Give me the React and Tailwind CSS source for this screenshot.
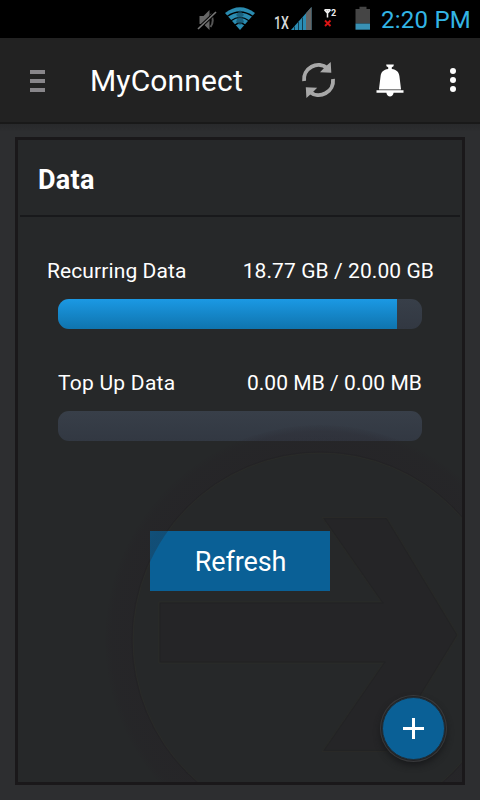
function StatusBar() {
  return (
    <div className="flex h-[38px] shrink-0 items-center bg-black pl-[196px]">
      <svg className="h-[38px] w-[174px] shrink-0" viewBox="196 0 174 38">
        {/* muted speaker */}
        <path d="M199.500 16h4l6-6v20l-6-6h-4z" fill="#666" />
        <path d="M210.500 14c3 3 3 9 0 13" fill="none" stroke="#555" strokeWidth="2" />
        <path d="M198 29L216 12" stroke="#000" strokeWidth="3.500" />
        <path d="M198 29L216 12" stroke="#777" strokeWidth="1.7" />
        {/* wifi */}
        <path d="M225 13Q240 1.500 255 13L240 30Z" fill="#2a8bb0" />
        <path d="M227 16.500Q240 7.500 253 16.500M231 20.800Q240 14 249 20.800M235 25Q240 21 245 25" fill="none" stroke="#000" strokeWidth="1.300" />
        <path d="M240 10l4 5-2 2 2 5-4 3-4-3 2-5-2-2z" fill="#16506a" opacity=".7" />
        <text x="274" y="29" fill="#d8d8d8" fontFamily="Roboto, sans-serif" fontWeight="500" fontSize="17.500" textLength="15" lengthAdjust="spacingAndGlyphs">1X</text>
        {/* signal */}
        <path d="M291 30L311.500 7V30Z" fill="#2b8db4" />
        <path d="M306 13.200L311.500 7V30H306Z" fill="#666" />
        <path d="M294.500 26.500v3.500M298.500 22v8M302.500 17.500v12.500" stroke="#123f52" strokeWidth="1" />
        {/* antenna */}
        <path d="M324.500 9.800h6M324.500 9.800l3 3.500 3-3.500M327.500 9.500v8" fill="none" stroke="#eee" strokeWidth="1.500" />
        <text x="331" y="16" fill="#eee" fontFamily="Roboto, sans-serif" fontWeight="700" fontSize="9">2</text>
        <path d="M325 20.500l5.500 5.500M330.500 20.500l-5.500 5.500" stroke="#dc1414" strokeWidth="1.900" />
        {/* battery */}
        <path d="M355.500 9h4V6.800h7V9h4v14.500h-15z" fill="#454545" />
        <path d="M355.500 23.500h15v6.200h-15z" fill="#3991b4" />
      </svg>
      <span className="ml-[11px] whitespace-nowrap pt-0.5 text-[24px] leading-[36px] tracking-[0.25px] text-[#33b5e5]">2:20 PM</span>
    </div>
  );
}

function AppBar() {
  return (
    <header className="flex h-[86px] shrink-0 items-center border-b-2 border-[#191919] bg-[#222222]">
      <div className="mt-0.5 ml-[30px] flex w-[15px] flex-col gap-[5px]">
        <span className="h-1 bg-[#88868a]" />
        <span className="h-1 bg-[#88868a]" />
        <span className="h-1 bg-[#88868a]" />
      </div>
      <h1 className="ml-[45px] w-[211px] whitespace-nowrap pt-0.5 text-[30px] leading-[40px] tracking-[0.15px] text-white">MyConnect</h1>
      <svg className="h-[38px] w-[36px] shrink-0" viewBox="301 61 36 38">
        <path d="M304.100 81a14.400 14.400 0 0 1 23.500-12.700M333 79a14.400 14.400 0 0 1-23.500 12.700" fill="none" stroke="#a8a8a8" strokeWidth="3.900" />
        <path d="M330.700 62L331.300 72.700 320 72.300 325 67zM306.400 98L305.800 87.300 317.200 87.700 312 93z" fill="#a8a8a8" />
      </svg>
      <svg className="ml-[38px] h-[36px] w-[30px] shrink-0" viewBox="375 62 30 36">
        <path d="M386.200 64.500h7.600l-.3 1.800-1.700 1v1.700c4.700.7 7 2.700 7.600 7l1.600 13H379l1.600-13c.6-4.300 2.900-6.300 7.600-7v-1.700l-1.700-1z" fill="#fff" />
        <path d="M379 89h22v1.400h-22z" fill="#888" />
        <path d="M376.500 90.200h27v2.600H393.600c-.4 4.800-6.800 4.800-7.200 0h-9.900z" fill="#fff" />
      </svg>
      <div className="ml-[45px] flex flex-col gap-[3px]">
        <span className="size-[6px] rounded-full bg-white" />
        <span className="size-[6px] rounded-full bg-white" />
        <span className="size-[6px] rounded-full bg-white" />
      </div>
    </header>
  );
}

function Meter({ percent }) {
  return (
    <div className="mx-10 h-[30px] overflow-hidden rounded-[11px] bg-linear-to-b from-[#383f49] to-[#323842]">
      <div className="h-full bg-linear-to-b from-[#1b99e4] to-[#0f74ae]" style={{ width: `${percent}%` }} />
    </div>
  );
}

const ARROW = "M159 602H381L322 517.500H387L458 635 387 751.500H322L383 663H159Z";

// Embossed edges of the watermark, painted below the buttons.
function WatermarkEdges() {
  return (
    <svg className="pointer-events-none absolute inset-0 h-[642px] w-[444px]" viewBox="18 140 444 642">
      <g fill="none" stroke="#2a2c28" strokeWidth="1">
        <circle cx="320" cy="640" r="187" />
        <path d={ARROW} />
      </g>
      <g fill="none" stroke="#202123" strokeWidth="1" strokeOpacity=".6">
        <circle cx="320" cy="640" r="188.200" />
        <path d="M160.200 603.200H383.300L324.300 518.700H386.300L456.600 635 386.300 750.300H324.300L385.300 661.800H160.200Z" />
      </g>
    </svg>
  );
}

// Translucent ring and arrow that tint everything in the card.
function WatermarkTint() {
  return (
    <svg className="pointer-events-none absolute inset-0 h-[642px] w-[444px]" viewBox="18 140 444 642">
      <defs>
        <radialGradient id="ring" gradientUnits="userSpaceOnUse" cx="320" cy="640" r="215">
          <stop offset=".9" stopColor="#251f25" stopOpacity=".28" />
          <stop offset=".97" stopColor="#251f25" stopOpacity=".22" />
          <stop offset="1" stopColor="#251f25" stopOpacity=".04" />
        </radialGradient>
      </defs>
      <path fill="url(#ring)" fillRule="evenodd" d="M105 640a215 215 0 1 0 430 0a215 215 0 1 0-430 0M133 640a187 187 0 1 0 374 0a187 187 0 1 0-374 0" />
      <path fill="#251f25" fillOpacity=".28" d={ARROW} />
    </svg>
  );
}

export default function App() {
  return (
    <div className="flex h-[800px] w-[480px] flex-col overflow-hidden bg-[#2d2e30] font-[Roboto,sans-serif] text-white">
      <StatusBar />
      <AppBar />
      <main className="flex flex-1 flex-col bg-linear-to-b from-[#28292b] to-[#2d2e30] to-[8px] px-[15px] pt-[13px] pb-[15px]">
        <section className="relative flex flex-1 flex-col border-[3px] border-[#1a181a] bg-[#262829]">
          <WatermarkEdges />
          <h2 className="mx-0.5 h-[77px] border-b-2 border-[#18191b] pl-[18px] text-[27px] leading-[81px] font-bold tracking-[0.3px]">Data</h2>
          <div className="mt-[41px] flex h-[26px] justify-between pr-[28px] pl-[29px] text-[21px] leading-[26px] whitespace-nowrap">
            <span className="tracking-[0.1px]">Recurring Data</span>
            <span className="tracking-[0.08px]">18.77 GB / 20.00 GB</span>
          </div>
          <div className="mt-[15px]"><Meter percent={93.2} /></div>
          <div className="mt-[41px] flex h-[26px] justify-between px-10 text-[21px] leading-[26px] whitespace-nowrap">
            <span className="tracking-[0.25px]">Top Up Data</span>
            <span className="tracking-[0.05px]">0.00 MB / 0.00 MB</span>
          </div>
          <div className="mt-[15px]"><Meter percent={0} /></div>
          <button className="relative mt-[90px] h-[60px] w-[180px] self-center bg-[#0a6096] pt-0.5 pl-px text-[27px] leading-[58px] tracking-[-0.15px]">Refresh</button>
          <WatermarkTint />
          <button aria-label="Add" className="absolute right-[17px] bottom-[22px] flex size-[63px] items-center justify-center rounded-full border border-[#202e38] bg-[#0a6096] shadow-[0_0_0_1px_#222325,0_0_0_2px_#38393b,0_4px_7px_1px_#17181a]">
            <svg className="size-[21px]" viewBox="0 0 21 21">
              <path d="M0 10.500h21M10.500 0v21" stroke="#fff" strokeWidth="3" />
            </svg>
          </button>
        </section>
      </main>
    </div>
  );
}
